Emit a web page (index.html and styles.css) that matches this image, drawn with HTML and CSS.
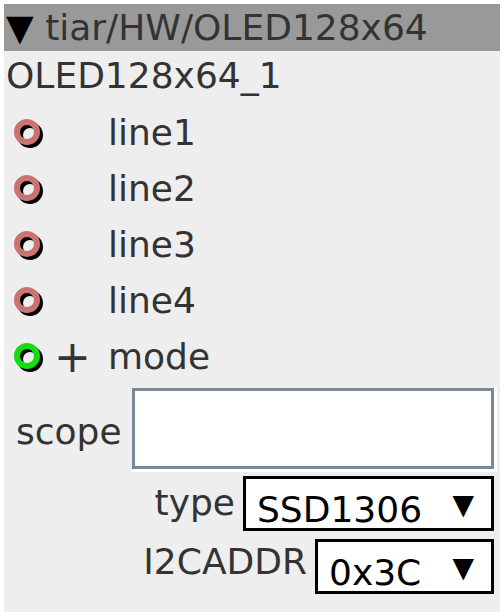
FILE: index.html
```html
<!DOCTYPE html>
<html lang="en">
<head>
    <meta charset="UTF-8">
    <title>tiar/HW/OLED128x64</title>
    <link rel="stylesheet" href="styles.css">
</head>
<body>
    <div class="panel">
        <div class="panel-head"><span class="caret">&#9660;</span> tiar/HW/OLED128x64</div>
        <div class="panel-body">
            <div class="node-name">OLED128x64_1</div>

            <ul class="ports">
                <li class="port">
                    <svg class="pin" width="34" height="34"><circle cx="17" cy="17" r="10" fill="none" stroke="#000" stroke-width="6"/><circle cx="14" cy="14" r="10" fill="none" stroke="#c97474" stroke-width="6"/></svg>
                    <span class="port-mark"></span>
                    <span class="port-name">line1</span>
                </li>
                <li class="port">
                    <svg class="pin" width="34" height="34"><circle cx="17" cy="17" r="10" fill="none" stroke="#000" stroke-width="6"/><circle cx="14" cy="14" r="10" fill="none" stroke="#c97474" stroke-width="6"/></svg>
                    <span class="port-mark"></span>
                    <span class="port-name">line2</span>
                </li>
                <li class="port">
                    <svg class="pin" width="34" height="34"><circle cx="17" cy="17" r="10" fill="none" stroke="#000" stroke-width="6"/><circle cx="14" cy="14" r="10" fill="none" stroke="#c97474" stroke-width="6"/></svg>
                    <span class="port-mark"></span>
                    <span class="port-name">line3</span>
                </li>
                <li class="port">
                    <svg class="pin" width="34" height="34"><circle cx="17" cy="17" r="10" fill="none" stroke="#000" stroke-width="6"/><circle cx="14" cy="14" r="10" fill="none" stroke="#c97474" stroke-width="6"/></svg>
                    <span class="port-mark"></span>
                    <span class="port-name">line4</span>
                </li>
                <li class="port">
                    <svg class="pin" width="34" height="34"><circle cx="17" cy="17" r="10" fill="none" stroke="#000" stroke-width="6"/><circle cx="14" cy="14" r="10" fill="none" stroke="#11dd11" stroke-width="6"/></svg>
                    <span class="port-mark">+</span>
                    <span class="port-name">mode</span>
                </li>
            </ul>

            <div class="field field-scope">
                <label>scope</label>
                <div class="text-wrap"><div class="text-box"></div></div>
            </div>

            <div class="field">
                <label>type</label>
                <div class="select select-type"><span class="select-value">SSD1306</span><span class="select-arrow">&#9660;</span></div>
            </div>

            <div class="field">
                <label>I2CADDR</label>
                <div class="select select-addr"><span class="select-value">0x3C</span><span class="select-arrow">&#9660;</span></div>
            </div>
        </div>
    </div>
</body>
</html>
```

FILE: styles.css
```css
body {
    margin: 0;
    padding: 4px 4px 4px 4px;
    background-color: #fff;
    font-family: "DejaVu Sans", sans-serif;
    font-size: 36px;
    color: #333;
}

.panel {
    width: 496px;
}

.panel-head {
    height: 47px;
    line-height: 47px;
    background-color: #999;
    padding-left: 2px;
    white-space: nowrap;
}

.caret {
    color: #000;
    font-size: 36px;
}

.panel-body {
    background-color: #eee;
    height: 561px;
}

.node-name {
    height: 54px;
    line-height: 50px;
    padding-left: 2px;
}

.ports {
    list-style: none;
    margin: 0;
    padding: 0;
}

.port {
    display: flex;
    align-items: center;
    height: 56px;
    line-height: 56px;
}

.pin {
    margin-left: 9px;
    margin-top: 4px;
    flex: none;
}

.port-mark {
    width: 61px;
    padding-left: 7px;
    box-sizing: border-box;
    font-size: 44px;
    line-height: 56px;
}

.field {
    display: flex;
    justify-content: flex-end;
    align-items: flex-start;
    padding-right: 6px;
}

.field label {
    margin-right: 8px;
    line-height: 46px;
    padding-top: 8px;
}

.field-scope {
    justify-content: flex-start;
    align-items: center;
    padding-left: 12px;
    margin-top: 1px;
}

.field-scope label {
    padding-top: 6px;
}

.text-wrap {
    border-style: solid;
    border-width: 2px 3px 3px 2px;
    border-color: #eee #fff #fff #eee;
}

.text-box {
    width: 356px;
    height: 75px;
    border: 3px solid #778899;
    background-color: #fff;
}

.select {
    display: flex;
    justify-content: space-between;
    align-items: flex-end;
    height: 49px;
    border: 3px solid #000;
    background-color: #fff;
    color: #000;
    box-sizing: content-box;
    padding: 0 17px 0 11px;
}

.select-type {
    width: 217px;
    margin-top: 4px;
}

.select-addr {
    width: 145px;
    margin-top: 8px;
}

.select-value {
    font-size: 36px;
    line-height: 36px;
}

.select-arrow {
    font-size: 28px;
    align-self: flex-start;
    line-height: 40px;
    margin-top: 6px;
}
```
